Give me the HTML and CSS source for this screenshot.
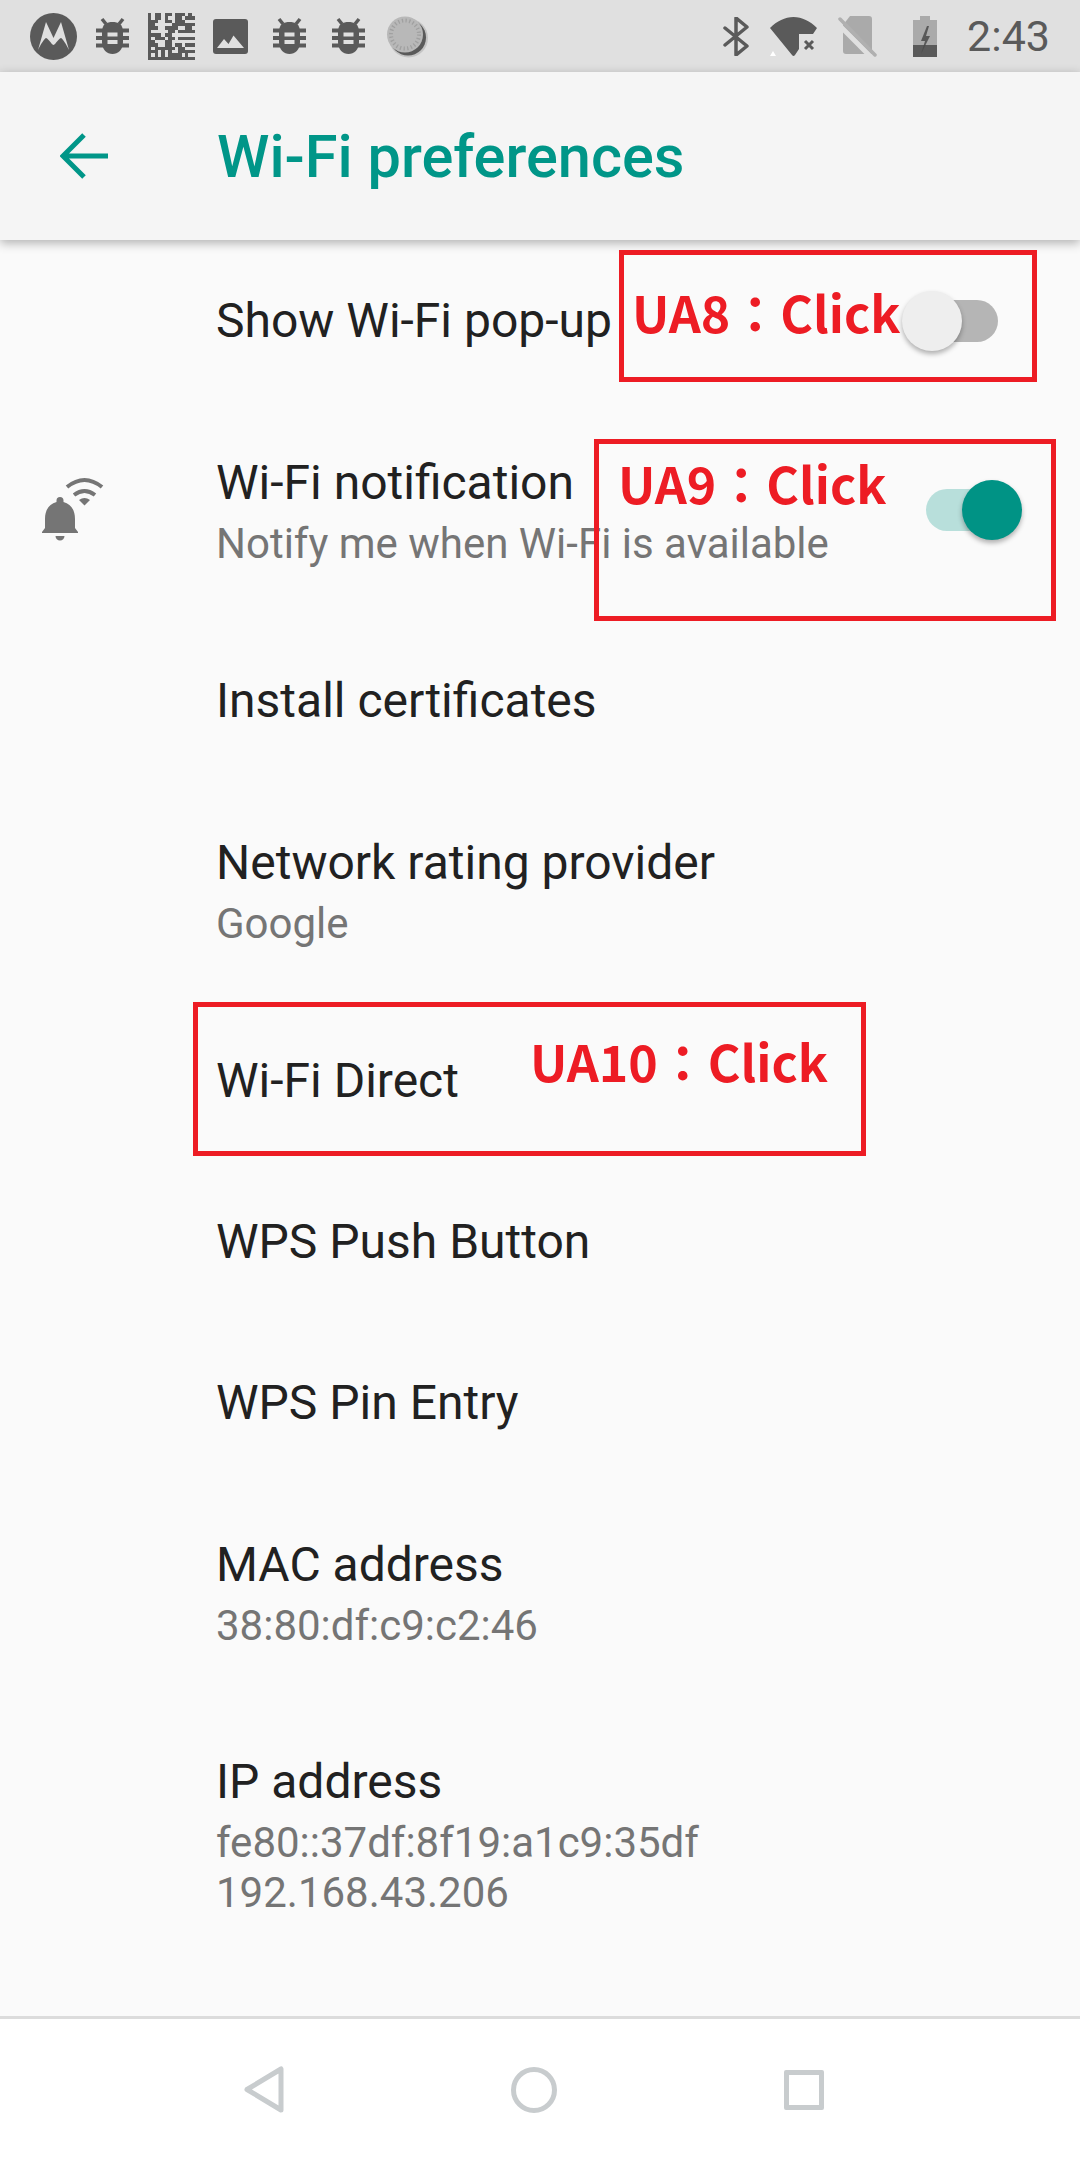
FILE: index.html
```html
<!DOCTYPE html>
<html lang="en">
<head>
    <meta charset="UTF-8">
    <title>Wi-Fi preferences</title>
    <link rel="stylesheet" href="styles.css">
</head>
<body>
    <div class="page">

        <div class="status-bar">
            <div class="status-left">
                <svg class="slot" viewBox="0 0 47 47">
                    <circle class="dark" cx="23.5" cy="23.5" r="23.5"/>
                    <path class="cut" d="M8 37L16 9l7.5 16L31 9l8 28c-3-6-6-11-8-12-3 1-5 6-7.500 7-2.500-1-4.500-6-7.500-7-2 1-5 6-8 12z"/>
                </svg>
                <svg class="slot" viewBox="0 0 47 47">
                    <use href="#bug"/>
                </svg>
                <svg class="slot qr" viewBox="0 0 14 14" shape-rendering="crispEdges">
                    <path d="M0 .5h1M2 .5h2M5 .5h2M8 .5h3M12 .5h1M0 1.500h1M2 1.500h2M5 1.500h1M8 1.500h2M11 1.500h3M0 2.500h3M5 2.500h2M8 2.500h3M0 3.500h2M7 3.500h7M0 4.500h3M5 4.500h4M11 4.500h2M0 5.500h1M6 5.500h2M9 5.500h5M0 6.500h4M5 6.500h2M0 7.500h1M2 7.500h3M6 7.500h2M9 7.500h5M0 8.500h2M5 8.500h2M0 9.500h3M5 9.500h2M8 9.500h2M11 9.500h3M0 10.500h1M2 10.500h6M9 10.500h2M0 11.500h3M4 11.500h1M6 11.500h1M9 11.500h5M0 12.500h1M2 12.500h1M4 12.500h1M6 12.500h4M11 12.500h1M0 13.500h14"/>
                </svg>
                <svg class="slot" viewBox="0 0 47 47">
                    <rect class="dark" x="6" y="6" width="35" height="35" rx="3"/>
                    <path class="cut" d="M10 35l7-9 4.500 5 5-8.500L37 35z"/>
                </svg>
                <svg class="slot" viewBox="0 0 47 47">
                    <use href="#bug"/>
                </svg>
                <svg class="slot" viewBox="0 0 47 47">
                    <use href="#bug"/>
                </svg>
                <svg class="slot" viewBox="0 0 47 47">
                    <circle cx="24.500" cy="25" r="19.500" fill="#c4c4c4"/>
                    <circle class="dark" cx="24" cy="24.500" r="18"/>
                    <circle cx="21" cy="21.500" r="18" fill="#b8b8b8"/>
                    <circle cx="21" cy="21.500" r="14" fill="none" stroke="#a0a0a0" stroke-width="4" stroke-dasharray="1.300 2.370"/>
                </svg>
            </div>
            <div class="status-right">
                <svg class="ic-bt" viewBox="0 0 26 39">
                    <path d="M2 11l22 18-11 9V1l11 9L2 28" fill="none" stroke="#5a5a5a" stroke-width="3.500" stroke-linejoin="round" stroke-linecap="round"/>
                </svg>
                <svg class="ic-wifi" viewBox="0 0 49 39">
                    <path class="dark" d="M1 11C8 4 16 0 24.500 0S41 4 48 11l-4 6H30v15l-4 6q-1.500 2-3 0z"/>
                    <path d="M36 24l8 8m0-8l-8 8" stroke="#5a5a5a" stroke-width="3" fill="none"/>
                    <path d="M1 39l3-5 3 5z" fill="#fff"/>
                </svg>
                <svg class="ic-sim" viewBox="0 0 39 41">
                    <path d="M12 0h19q3 0 3 3v35H8q-3 0-3-3V9z" fill="#aaa"/>
                    <path d="M-1 7l36 36" stroke="#e0e0e0" stroke-width="5" fill="none"/>
                    <path d="M2 3l35 36" stroke="#b0b0b0" stroke-width="3.500" stroke-linecap="round" fill="none"/>
                </svg>
                <svg class="ic-batt" viewBox="0 0 24 41">
                    <path d="M7 0h10v4h7v25H0V4h7z" fill="#aaa"/>
                    <rect class="dark" y="29" width="24" height="12"/>
                    <path d="M14 10L8 25h4L8 38l9-18h-4l3-10z" fill="#4a4a4a" opacity=".85"/>
                </svg>
                <span class="clock">2:43</span>
            </div>
        </div>

        <div class="toolbar">
            <svg class="back" viewBox="0 0 48 48">
                <path d="M48 24H4M24 3L3 24l21 21" fill="none" stroke="#009688" stroke-width="5"/>
            </svg>
            <h1>Wi-Fi preferences</h1>
        </div>

        <div class="list">
            <div class="row">
                <div class="text"><div class="name">Show Wi-Fi pop-up</div></div>
                <div class="switch"><span class="thumb"></span></div>
            </div>
            <div class="row two">
                <svg class="row-icon" viewBox="0 0 64 66">
                    <path d="M20 20a3.500 3.500 0 0 1 3.500 3.500V25C31 27 35 33 35 42v9l3 4v1H2v-1l3-4v-9c0-9 4-15 11.500-17v-1.500A3.500 3.500 0 0 1 20 20zM15.500 59h9a4.500 4.500 0 0 1-9 0z" fill="#757575"/>
                    <path d="M27 10q17.500-14 35 0M34 18q10.500-8 21 0" fill="none" stroke="#757575" stroke-width="4"/>
                    <path d="M39 23q5.500-4 11 0l-5.500 5.500z" fill="#757575"/>
                </svg>
                <div class="text">
                    <div class="name">Wi-Fi notification</div>
                    <div class="sub">Notify me when Wi-Fi is available</div>
                </div>
                <div class="switch on"><span class="thumb"></span></div>
            </div>
            <div class="row">
                <div class="text"><div class="name">Install certificates</div></div>
            </div>
            <div class="row two">
                <div class="text">
                    <div class="name">Network rating provider</div>
                    <div class="sub">Google</div>
                </div>
            </div>
            <div class="row">
                <div class="text"><div class="name">Wi-Fi Direct</div></div>
            </div>
            <div class="row">
                <div class="text"><div class="name">WPS Push Button</div></div>
            </div>
            <div class="row">
                <div class="text"><div class="name">WPS Pin Entry</div></div>
            </div>
            <div class="row two">
                <div class="text">
                    <div class="name">MAC address</div>
                    <div class="sub">38:80:df:c9:c2:46</div>
                </div>
            </div>
            <div class="row two last">
                <div class="text">
                    <div class="name">IP address</div>
                    <div class="sub">fe80::37df:8f19:a1c9:35df<br>192.168.43.206</div>
                </div>
            </div>
        </div>

        <div class="nav-bar">
            <div class="nav-slot">
                <svg class="nav-back" viewBox="0 0 40 47">
                    <path d="M37 3v41L3 23.500z" fill="none" stroke="#c8ccce" stroke-width="5" stroke-linejoin="round"/>
                </svg>
            </div>
            <div class="nav-slot"><span class="nav-home"></span></div>
            <div class="nav-slot"><span class="nav-recent"></span></div>
        </div>

        <div class="mark mark-8">UA8：Click</div>
        <div class="mark mark-9">UA9：Click</div>
        <div class="mark mark-10">UA10：Click</div>

        <svg class="defs" width="0" height="0">
            <g id="bug">
                <path d="M17 11l-4-5M30 11l4-5" stroke="#5a5a5a" stroke-width="3.500" fill="none"/>
                <path d="M13 19c0-8 5-10 10.500-10S34 11 34 19v10c0 8-5 12-10.500 12S13 37 13 29z" fill="#5a5a5a"/>
                <path d="M7 15.500h33v4H7zM7 23h33v4H7zM7 30.500h33v4H7z" fill="#5a5a5a"/>
                <path d="M18.500 19.500h10v4h-10zM18.500 27h10v4h-10z" fill="#e0e0e0"/>
            </g>
        </svg>

    </div>
</body>
</html>
```

FILE: styles.css
```css
body {
    margin: 0;
    font-family: Roboto, sans-serif;
    background-color: #fafafa;
}

.page {
    position: relative;
    width: 1080px;
    height: 2160px;
    display: flex;
    flex-direction: column;
    overflow: hidden;
}

.defs {
    position: absolute;
}

.dark {
    fill: #5a5a5a;
}

.cut {
    fill: #e0e0e0;
}

/* status bar */
.status-bar {
    height: 72px;
    flex: none;
    display: flex;
    align-items: center;
    justify-content: space-between;
    padding: 0 30px 0 30px;
    background-color: #e0e0e0;
}

.status-left, .status-right {
    display: flex;
    align-items: center;
}

.status-left {
    gap: 12px;
}

.status-right {
    gap: 20px;
}

.slot {
    width: 47px;
    height: 47px;
}

.qr path {
    fill: none;
    stroke: #5a5a5a;
    stroke-width: 1;
}

.ic-bt {
    width: 26px;
    height: 39px;
}

.ic-wifi {
    width: 49px;
    height: 39px;
}

.ic-sim {
    width: 39px;
    height: 41px;
    margin-right: 16px;
}

.ic-batt {
    width: 24px;
    height: 41px;
    margin-right: 10px;
}

.clock {
    font-size: 43px;
    color: #5a5a5a;
    line-height: 72px;
}

/* toolbar */
.toolbar {
    position: relative;
    height: 168px;
    flex: none;
    display: flex;
    align-items: center;
    padding-left: 60px;
    background-color: #f5f5f5;
    box-shadow: 0 3px 10px rgba(0, 0, 0, 0.3);
}

.back {
    width: 48px;
    height: 48px;
    margin-right: 109px;
}

h1 {
    margin: 2px 0 0;
    font-size: 59.5px;
    font-weight: 500;
    color: #009688;
}

/* list */
.list {
    flex: 1;
}

.row {
    min-height: 161px;
    display: flex;
    align-items: center;
    box-sizing: border-box;
    padding: 1px 58px 0 216px;
}

.row.two {
    min-height: 219px;
    align-items: flex-start;
    padding-top: 51px;
}

.row.two.last {
    padding-top: 49px;
}

.row-icon {
    width: 64px;
    height: 66px;
    margin-top: 25px;
    margin-left: -176px;
    margin-right: 112px;
    flex: none;
}

.text {
    flex: 1;
}

.name {
    font-size: 48px;
    line-height: 62px;
    color: #212121;
}

.sub {
    font-size: 42px;
    line-height: 50px;
    margin-top: 5px;
    color: #757575;
}

.switch {
    position: relative;
    width: 120px;
    height: 60px;
    display: flex;
    flex: none;
}

.switch::before {
    content: "";
    position: absolute;
    left: 24px;
    right: 24px;
    top: 9px;
    height: 42px;
    border-radius: 21px;
    background-color: #b5b5b5;
}

.thumb {
    position: relative;
    width: 60px;
    height: 60px;
    border-radius: 50%;
    background-color: #eeeeee;
    box-shadow: 0 3px 5px rgba(0, 0, 0, 0.3);
}

.switch.on {
    justify-content: flex-end;
    margin-top: 28px;
}

.switch.on::before {
    background-color: #b8dfdb;
}

.switch.on .thumb {
    background-color: #009385;
}

/* nav bar */
.nav-bar {
    flex: none;
    display: flex;
    justify-content: center;
    align-items: center;
    padding-right: 12px;
    border-top: 3px solid #dcdcdc;
    box-sizing: border-box;
    height: 144px;
    background-color: #ffffff;
}

.nav-slot {
    width: 270px;
    display: flex;
    justify-content: center;
    align-items: center;
}

.nav-back {
    width: 40px;
    height: 47px;
}

.nav-home {
    width: 46px;
    height: 46px;
    box-sizing: border-box;
    border: 5px solid #c8ccce;
    border-radius: 50%;
}

.nav-recent {
    width: 40px;
    height: 40px;
    box-sizing: border-box;
    border: 5px solid #c8ccce;
    border-radius: 2px;
}

/* red annotations laid over the screenshot */
.mark {
    position: absolute;
    box-sizing: border-box;
    border: 5px solid #ed1c24;
    font-family: "Noto Sans CJK TC", sans-serif;
    font-weight: 700;
    font-size: 50px;
    line-height: 60px;
    color: #ed1c24;
    white-space: nowrap;
}

.mark-8 {
    left: 619px;
    top: 250px;
    width: 418px;
    height: 132px;
    padding: 26px 0 0 8px;
}

.mark-9 {
    left: 594px;
    top: 439px;
    width: 462px;
    height: 182px;
    padding: 8px 0 0 19px;
}

.mark-10 {
    left: 193px;
    top: 1002px;
    width: 673px;
    height: 154px;
    padding: 23px 0 0 332px;
}
```
